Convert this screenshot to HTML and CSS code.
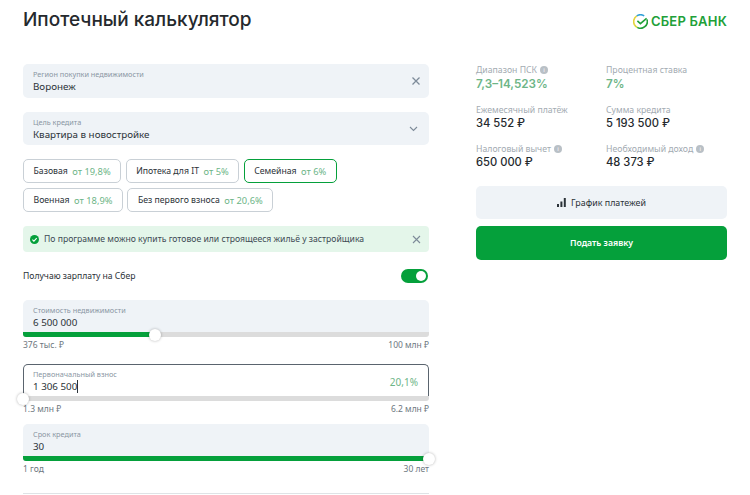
FILE: index.html
```html
<!DOCTYPE html>
<html lang="ru">
<head>
<meta charset="utf-8">
<title>Ипотечный калькулятор</title>
<link rel="stylesheet" href="styles.css">
</head>
<body>
<div class="page">
  <header class="top">
    <h1 class="title">Ипотечный калькулятор</h1>
    <div class="logo">
      <svg class="logo-mark" width="15" height="15" viewBox="0 0 15 15">
        <path d="M1.6 11A6.8 6.8 0 0 1 3.8 1.9" fill="none" stroke="#e3d33a" stroke-width="1.6"/>
        <path d="M3.8 1.9A6.8 6.8 0 0 1 11.2 1.9" fill="none" stroke="#2f9fd8" stroke-width="1.6"/>
        <path d="M14 5.4A6.8 6.8 0 0 1 4.2 13.4" fill="none" stroke="#21a038" stroke-width="1.6"/>
        <path d="M4.2 13.4A6.8 6.8 0 0 1 1.6 11" fill="none" stroke="#d8d83a" stroke-width="1.6"/>
        <path d="M4.4 6.9L7.4 9.6l6.2-5.2" fill="none" stroke="#21a038" stroke-width="1.6"/>
      </svg>
      <span class="logo-text">СБЕР БАНК</span>
    </div>
  </header>
  <div class="columns">
    <main class="left">
      <div class="field">
        <div class="field-label">Регион покупки недвижимости</div>
        <div class="field-value">Воронеж</div>
        <svg class="field-icon" width="10" height="10" viewBox="0 0 10 10"><path d="M1.5 1.5l7 7M8.5 1.5l-7 7" stroke="#7d8b99" stroke-width="1.3" fill="none"/></svg>
      </div>
      <div class="field">
        <div class="field-label">Цель кредита</div>
        <div class="field-value">Квартира в новостройке</div>
        <svg class="field-icon chev" width="9" height="6" viewBox="0 0 9 6"><path d="M1 1l3.5 3.5L8 1" stroke="#7d8b99" stroke-width="1.1" fill="none"/></svg>
      </div>
      <div class="chips">
        <div class="chip">Базовая<span class="rate">от 19,8%</span></div>
        <div class="chip">Ипотека для IT<span class="rate">от 5%</span></div>
        <div class="chip active">Семейная<span class="rate">от 6%</span></div>
        <div class="chip">Военная<span class="rate">от 18,9%</span></div>
        <div class="chip">Без первого взноса<span class="rate">от 20,6%</span></div>
      </div>
      <div class="alert">
        <svg width="9" height="9" viewBox="0 0 9 9"><circle cx="4.5" cy="4.5" r="4.5" fill="#05a03b"/><path d="M2.4 4.6l1.5 1.5 2.8-2.9" stroke="#fff" stroke-width="1.1" fill="none"/></svg>
        <span class="alert-text">По программе можно купить готовое или строящееся жильё у застройщика</span>
        <svg class="alert-close" width="9" height="9" viewBox="0 0 9 9"><path d="M1 1l7 7M8 1l-7 7" stroke="#7d8b99" stroke-width="1.1" fill="none"/></svg>
      </div>
      <div class="switch-row">
        <span>Получаю зарплату на Сбер</span>
        <span class="switch"><span class="knob"></span></span>
      </div>
      <section class="slider-block wide">
        <div class="slider-field">
          <div class="field-label">Стоимость недвижимости</div>
          <div class="field-value">6 500 000</div>
        </div>
        <div class="track"><div class="fill" style="width:32.5%"></div><span class="thumb" style="left:32.5%"></span></div>
        <div class="range"><span>376 тыс. ₽</span><span>100 млн ₽</span></div>
      </section>
      <section class="slider-block">
        <div class="slider-field focus">
          <div class="field-label">Первоначальный взнос</div>
          <div class="field-value"><span class="caret">1 306 500</span></div>
          <span class="percent">20,1%</span>
        </div>
        <div class="track"><span class="thumb" style="left:0"></span></div>
        <div class="range"><span>1.3 млн ₽</span><span>6.2 млн ₽</span></div>
      </section>
      <section class="slider-block">
        <div class="slider-field">
          <div class="field-label">Срок кредита</div>
          <div class="field-value">30</div>
        </div>
        <div class="track"><div class="fill" style="width:100%"></div><span class="thumb" style="left:100%"></span></div>
        <div class="range"><span>1 год</span><span>30 лет</span></div>
      </section>
      <div class="divider"></div>
    </main>
    <aside class="right">
      <div class="stats">
        <div class="stat"><div class="stat-label">Диапазон ПСК<span class="info">i</span></div><div class="stat-value green">7,3–14,523%</div></div>
        <div class="stat"><div class="stat-label">Процентная ставка</div><div class="stat-value green">7%</div></div>
        <div class="stat"><div class="stat-label">Ежемесячный платёж</div><div class="stat-value">34 552 ₽</div></div>
        <div class="stat"><div class="stat-label">Сумма кредита</div><div class="stat-value">5 193 500 ₽</div></div>
        <div class="stat"><div class="stat-label">Налоговый вычет<span class="info">i</span></div><div class="stat-value">650 000 ₽</div></div>
        <div class="stat"><div class="stat-label">Необходимый доход<span class="info">i</span></div><div class="stat-value">48 373 ₽</div></div>
      </div>
      <div class="btn btn-light">
        <svg width="9" height="9" viewBox="0 0 9 9"><path d="M0 6h2v3H0zM3.4 3.5h2V9h-2zM6.8 0h2v9h-2z" fill="#2b3238"/></svg>
        График платежей
      </div>
      <div class="btn btn-green">Подать заявку</div>
    </aside>
  </div>
</div>
</body>
</html>
```
FILE: styles.css
```css
html, body { margin: 0; padding: 0; height: 495px; overflow: hidden; background: #fff; }
body { font-family: "Noto Sans", "DejaVu Sans", sans-serif; color: #2b3238; }
.page { padding: 0 23px; }
.top { display: flex; justify-content: space-between; align-items: center; height: 38px; }
.title { margin: 0; font-family: Inter, sans-serif; font-size: 19px; font-weight: 500; color: #25292d; }
.logo { display: flex; align-items: center; gap: 3px; margin-top: 4px; margin-left: -3px; }
.logo-mark { display: block; }
.logo-text { font-family: Inter, sans-serif; font-size: 13px; font-weight: 600; color: #21a038; letter-spacing: .2px; }
.columns { display: flex; gap: 47px; padding-top: 26px; }
.left { width: 406px; }
.right { width: 251px; }
.field { position: relative; box-sizing: border-box; height: 33.5px; padding: 5px 10px 0; background: #eff3f7; border-radius: 5px; margin-bottom: 14px; }
.field-label { font-size: 7.3px; line-height: 10px; color: #8a96a3; }
.field-value { font-size: 9.8px; line-height: 14px; margin-top: 1px; color: #2b3238; }
.field-icon { position: absolute; right: 8px; top: 12px; }
.chev { top: 14px; right: 11px; }
.chips { display: flex; flex-wrap: wrap; gap: 5px 4.5px; width: 340px; margin-bottom: 14px; }
.chip { box-sizing: border-box; height: 24px; display: flex; align-items: center; padding: 0 9.5px; font-size: 8.7px; border: 1px solid #c9d0d6; border-radius: 5px; white-space: nowrap; }
.chip.active { border: 1.5px solid #05a03b; }
.rate { margin-left: 4.5px; font-size: 9.3px; color: #6db587; }
.alert { display: flex; align-items: center; gap: 5px; box-sizing: border-box; height: 26px; padding: 0 8px 0 7px; background: #e4f6ea; border-radius: 4px; margin-bottom: 14px; }
.alert-text { flex: 1; font-size: 8.65px; color: #3e4a54; }
.switch-row { display: flex; justify-content: space-between; align-items: center; height: 20px; font-size: 8.6px; margin-bottom: 14px; }
.switch { position: relative; width: 27px; height: 14px; background: #05a03b; border-radius: 7px; margin-right: 1px; }
.knob { position: absolute; right: 2px; top: 2px; width: 10px; height: 10px; background: #fff; border-radius: 50%; }
.slider-block { margin-bottom: 9px; }
.slider-block.wide { margin-bottom: 13px; }
.slider-field { position: relative; box-sizing: border-box; height: 32px; padding: 5px 10px 0; background: #eff3f7; border-radius: 5px 5px 0 0; }
.slider-field.focus { background: #fff; border: 1px solid #5a646e; border-bottom: 0; padding: 4px 9px 0; }
.percent { position: absolute; right: 10px; top: 10px; font-size: 10px; color: #6db587; }
.caret { border-right: 1px solid #2b3238; }
.track { position: relative; height: 5px; background: #dcdcdc; border-radius: 0 0 3px 3px; }
.fill { height: 100%; background: #05a03b; border-radius: 0 0 0 3px; }
.thumb { position: absolute; top: -3.5px; width: 12px; height: 12px; margin-left: -6px; background: #fff; border-radius: 50%; box-shadow: 0 0 3px rgba(0,0,0,.3); }
.range { display: flex; justify-content: space-between; font-size: 8.5px; line-height: 12px; padding-top: 2px; color: #6d7780; }
.divider { height: 1px; background: #dfe3e6; margin-top: 18px; }
.stats { display: grid; grid-template-columns: 130px 121px; row-gap: 12.5px; margin-bottom: 15.5px; }
.stat-label { display: flex; align-items: center; gap: 3px; height: 12px; font-size: 8.7px; color: #a3abb2; }
.stat-value { font-family: Inter, sans-serif; font-size: 11.2px; font-weight: 500; line-height: 15px; color: #25292d; }
.stat-value.green { color: #6db587; font-size: 11.7px; font-weight: 600; margin-top: 1px; margin-bottom: -1px; }
.info { display: inline-block; width: 8px; height: 8px; border-radius: 50%; background: #b9c0c6; color: #fff; font-size: 6px; line-height: 8px; text-align: center; }
.btn { display: flex; align-items: center; justify-content: center; gap: 5px; box-sizing: border-box; height: 33.5px; border-radius: 5px; font-size: 8.9px; }
.btn-light { background: #eff3f7; margin-bottom: 7px; }
.btn-green { background: #05a03b; color: #fff; font-weight: 600; font-size: 8.7px; }
```
